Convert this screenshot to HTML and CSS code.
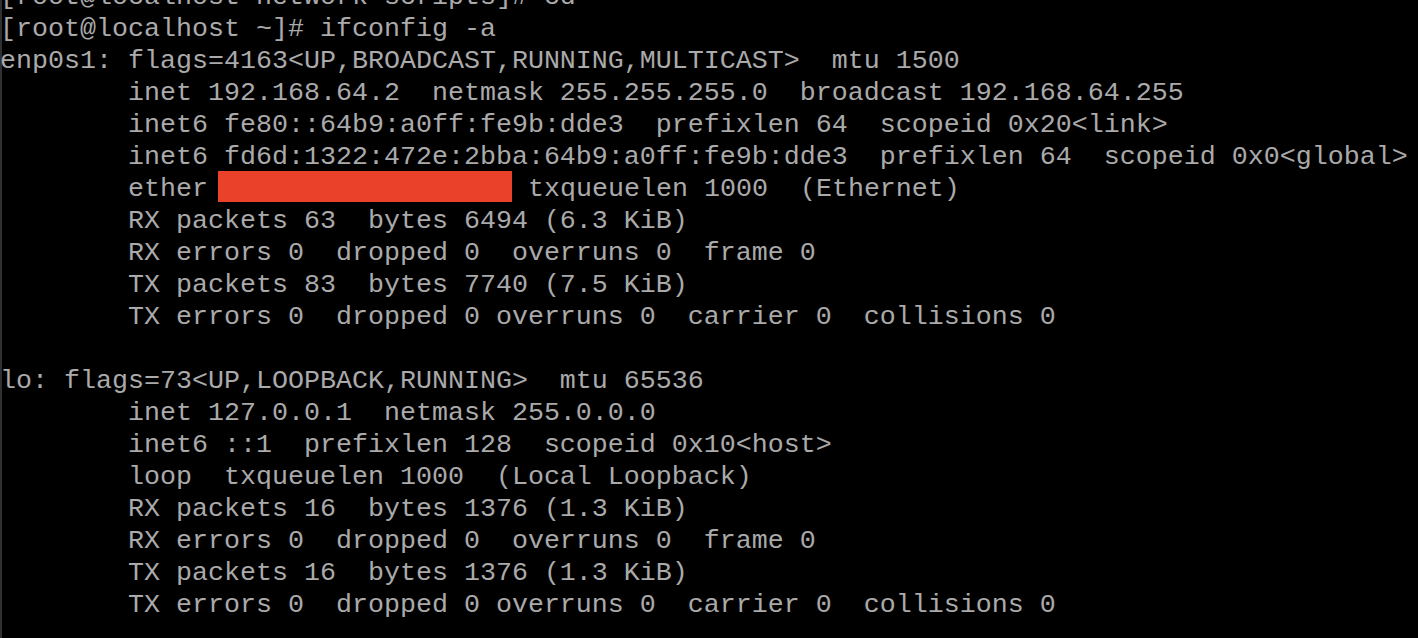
FILE: index.html
```html
<!DOCTYPE html>
<html lang="en">
<head>
<meta charset="utf-8">
<title>ifconfig -a</title>
<link rel="stylesheet" href="styles.css">
</head>
<body>
<pre class="term">[root@localhost network-scripts]# cd
[root@localhost ~]# ifconfig -a
enp0s1: flags=4163&lt;UP,BROADCAST,RUNNING,MULTICAST&gt;  mtu 1500
        inet 192.168.64.2  netmask 255.255.255.0  broadcast 192.168.64.255
        inet6 fe80::64b9:a0ff:fe9b:dde3  prefixlen 64  scopeid 0x20&lt;link&gt;
        inet6 fd6d:1322:472e:2bba:64b9:a0ff:fe9b:dde3  prefixlen 64  scopeid 0x0&lt;global&gt;
        ether <span class="redact"></span>txqueuelen 1000  (Ethernet)
        RX packets 63  bytes 6494 (6.3 KiB)
        RX errors 0  dropped 0  overruns 0  frame 0
        TX packets 83  bytes 7740 (7.5 KiB)
        TX errors 0  dropped 0 overruns 0  carrier 0  collisions 0

lo: flags=73&lt;UP,LOOPBACK,RUNNING&gt;  mtu 65536
        inet 127.0.0.1  netmask 255.0.0.0
        inet6 ::1  prefixlen 128  scopeid 0x10&lt;host&gt;
        loop  txqueuelen 1000  (Local Loopback)
        RX packets 16  bytes 1376 (1.3 KiB)
        RX errors 0  dropped 0  overruns 0  frame 0
        TX packets 16  bytes 1376 (1.3 KiB)
        TX errors 0  dropped 0 overruns 0  carrier 0  collisions 0
</pre>
</body>
</html>
```
FILE: styles.css
```css
html, body {
  margin: 0;
  height: 100%;
}

body {
  background: linear-gradient(to right, #303030 0, #303030 2px, #000 2px);
  overflow: hidden;
}

.term {
  margin: -19px 0 0 0;
  padding: 0;
  font-family: "Liberation Mono", "DejaVu Sans Mono", monospace;
  font-size: 26.66px;
  line-height: 32px;
  color: #aaaaaa;
  white-space: pre;
}

.redact {
  display: inline-block;
  width: 294px;
  height: 31px;
  margin: -2px 16px 0 -6px;
  vertical-align: -6px;
  background: #e9412a;
}
```
